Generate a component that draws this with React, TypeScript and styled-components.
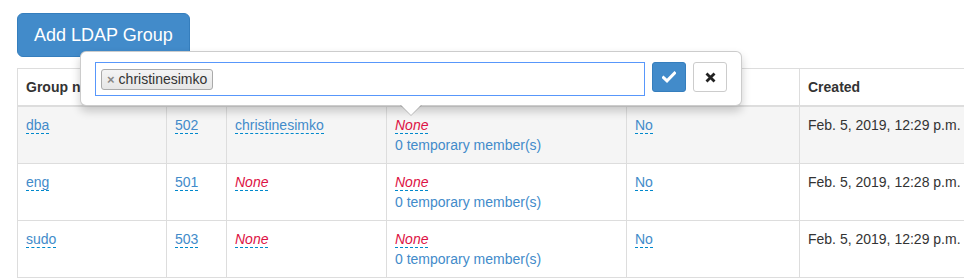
import React from "react";
import styled, { createGlobalStyle } from "styled-components";

const Global = createGlobalStyle`
  html, body { margin: 0; padding: 0; overflow: hidden; background: #fff; }
  body { font-family: "Liberation Sans", Arial, sans-serif; font-size: 14px; line-height: 20px; color: #333; }
`;

const Page = styled.div`
  position: relative;
  padding: 13px 0 0 17px;
  width: 1100px;
`;

const PrimaryButton = styled.button`
  display: block;
  font-family: inherit;
  font-size: 18px;
  line-height: 22px;
  padding: 10px 16px;
  height: 44px;
  color: #fff;
  background: #428bca;
  border: 1px solid #357ebd;
  border-radius: 6px;
  margin: 0 0 11px 0;
  cursor: pointer;
`;

const Table = styled.table`
  border-collapse: collapse;
  table-layout: fixed;
  width: 1000px;
  border: 1px solid #ddd;
`;

const Th = styled.th`
  text-align: left;
  font-weight: bold;
  padding: 8px;
  line-height: 20px;
  border: 1px solid #ddd;
  border-bottom: 2px solid #ddd;
  vertical-align: bottom;
`;

const Row = styled.tr<{ $shade?: boolean }>`
  background: ${(p) => (p.$shade ? "#f5f5f5" : "#fff")};
`;

const Td = styled.td`
  padding: 8px;
  line-height: 20px;
  border: 1px solid #ddd;
  vertical-align: top;
`;

const Editable = styled.a<{ $empty?: boolean }>`
  color: ${(p) => (p.$empty ? "#dd1144" : "#428bca")};
  font-style: ${(p) => (p.$empty ? "italic" : "normal")};
  text-decoration: none;
  border-bottom: 1px dashed #0088cc;
`;

const LinkLine = styled.a`
  display: block;
  color: #428bca;
  text-decoration: none;
`;

const Popover = styled.div`
  position: absolute;
  left: 80px;
  top: 51px;
  width: 632px;
  padding: 10px 14px 9px 14px;
  background: #fff;
  border: 1px solid rgba(0, 0, 0, 0.2);
  border-radius: 6px;
  box-shadow: 0 5px 10px rgba(0, 0, 0, 0.2);
  display: flex;
  align-items: flex-start;
  gap: 7px;
  &::before {
    content: "";
    position: absolute;
    left: 319px;
    bottom: -11px;
    border-width: 11px 11px 0 11px;
    border-style: solid;
    border-color: rgba(0, 0, 0, 0.2) transparent transparent transparent;
  }
  &::after {
    content: "";
    position: absolute;
    left: 320px;
    bottom: -10px;
    border-width: 10px 10px 0 10px;
    border-style: solid;
    border-color: #fff transparent transparent transparent;
  }
`;

const TagInput = styled.div`
  box-sizing: border-box;
  width: 550px;
  height: 34px;
  border: 1px solid #5897fb;
  background: #fff;
  padding: 4px 5px;
  display: flex;
  align-items: center;
`;

const Tag = styled.span`
  display: inline-flex;
  align-items: center;
  gap: 4px;
  height: 21px;
  box-sizing: border-box;
  padding: 0 5px 0 5px;
  background: linear-gradient(#f4f4f4, #e6e6e6);
  border: 1px solid #aaa;
  border-radius: 3px;
  color: #333;
  font-size: 14px;
  line-height: 19px;
`;

const TagRemove = styled.span`
  color: #888;
  font-size: 13px;
  font-weight: bold;
  line-height: 1;
`;

const IconButton = styled.button<{ $primary?: boolean }>`
  box-sizing: border-box;
  width: 34px;
  height: 30px;
  display: flex;
  align-items: center;
  justify-content: center;
  padding: 0;
  border-radius: 3px;
  border: 1px solid ${(p) => (p.$primary ? "#357ebd" : "#ccc")};
  background: ${(p) => (p.$primary ? "#428bca" : "#fff")};
  color: ${(p) => (p.$primary ? "#fff" : "#333")};
  cursor: pointer;
`;

const rows = [
  { name: "dba", gid: "502", members: "christinesimko", date: "Feb. 5, 2019, 12:29 p.m.", shade: true },
  { name: "eng", gid: "501", members: null, date: "Feb. 5, 2019, 12:28 p.m.", shade: false },
  { name: "sudo", gid: "503", members: null, date: "Feb. 5, 2019, 12:29 p.m.", shade: false },
];

export default function App() {
  return (
    <>
      <Global />
      <Page>
        <PrimaryButton>Add LDAP Group</PrimaryButton>
        <Table>
          <colgroup>
            <col style={{ width: 149 }} />
            <col style={{ width: 60 }} />
            <col style={{ width: 160 }} />
            <col style={{ width: 240 }} />
            <col style={{ width: 173 }} />
            <col style={{ width: 218 }} />
          </colgroup>
          <thead>
            <tr>
              <Th>Group name</Th>
              <Th>GID</Th>
              <Th>Members</Th>
              <Th>Temporary members</Th>
              <Th>Sudo</Th>
              <Th>Created</Th>
            </tr>
          </thead>
          <tbody>
            {rows.map((r) => (
              <Row key={r.name} $shade={r.shade}>
                <Td><Editable>{r.name}</Editable></Td>
                <Td><Editable>{r.gid}</Editable></Td>
                <Td>
                  {r.members ? <Editable>{r.members}</Editable> : <Editable $empty>None</Editable>}
                </Td>
                <Td>
                  <Editable $empty>None</Editable>
                  <LinkLine>0 temporary member(s)</LinkLine>
                </Td>
                <Td><Editable>No</Editable></Td>
                <Td>{r.date}</Td>
              </Row>
            ))}
          </tbody>
        </Table>
        <Popover>
          <TagInput>
            <Tag>
              <TagRemove>×</TagRemove>
              christinesimko
            </Tag>
          </TagInput>
          <IconButton $primary aria-label="ok">
            <svg width="14" height="12" viewBox="0 0 14 12">
              <path d="M1.5 6.5 L5 9.8 L12.5 2.2" fill="none" stroke="#fff" strokeWidth="3" strokeLinecap="square" />
            </svg>
          </IconButton>
          <IconButton aria-label="cancel">
            <svg width="11" height="11" viewBox="0 0 11 11">
              <path d="M1.5 1.5 L9.5 9.5 M9.5 1.5 L1.5 9.5" fill="none" stroke="#222" strokeWidth="2.8" />
            </svg>
          </IconButton>
        </Popover>
      </Page>
    </>
  );
}
